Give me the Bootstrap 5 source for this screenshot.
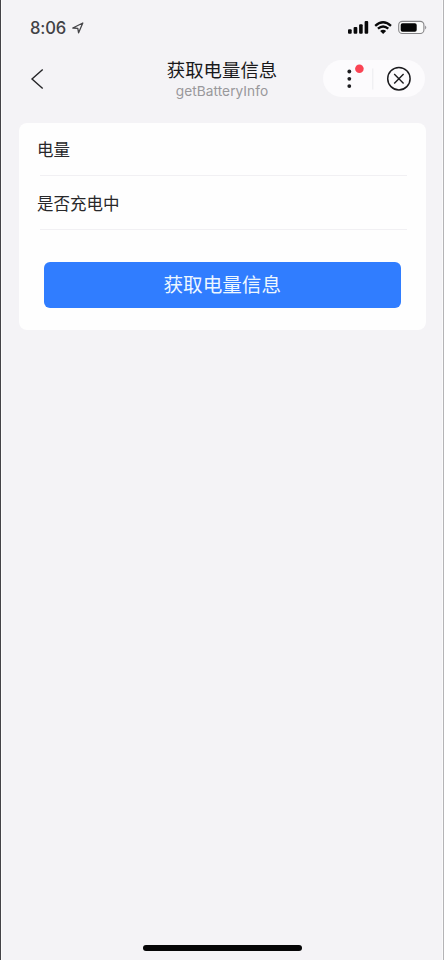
<!DOCTYPE html>
<html lang="zh-CN">
<head>
<meta charset="utf-8">
<meta name="viewport" content="width=device-width, initial-scale=1">
<title>获取电量信息</title>
<link href="https://cdn.jsdelivr.net/npm/bootstrap@5.3.0/dist/css/bootstrap.min.css" rel="stylesheet">
<style>
body{background:#f4f3f6;font-family:"Inter","Noto Sans CJK SC",sans-serif;color:#1d1d20}
.screen{height:960px;border-left:1px solid #444347;border-right:1px solid #b4b3b6;box-shadow:inset 1px 0 #fbfbfb,inset -1px 0 #fafafa}
.status{height:54px;padding-left:29px;padding-right:15px;padding-top:1px}
.clock{font:500 16.6px/20px "Inter",sans-serif;color:#414145;letter-spacing:-.15px}
.locate{margin-left:6px}
.topbar{height:50px;display:grid;grid-template-columns:1fr 112px 1fr}
.back{padding-left:29px}
.heading{font-size:18.4px;line-height:24px;font-weight:400;white-space:nowrap;color:#19191b}
.title-block{padding-top:4px}
.sub{font:400 13.7px/18px "Inter",sans-serif;color:#99989b;letter-spacing:.05px}
.capsule{width:102px;height:37px;background:#fcfbfd;margin-right:18px;margin-bottom:2px}
.panel{margin:18.5px 17px 0 18px;height:207px;border-radius:8px;background:#fefefe}
.item{height:54px;margin:0 19px 0 18px;font-size:16.5px;line-height:55px;color:#28282a}
.item::after{content:"";display:block;height:1px;margin-left:3px;margin-top:-3px;background:#f1f0f3}
.fetch{margin:31px 25px 0 24.5px;height:46px;border-radius:6px;background:#307dff;border:0;color:#edf7ff;font-size:19.6px;line-height:46px;padding:0}
.home{width:159px;height:6px;background:#050506;margin-bottom:9px}
</style>
</head>
<body>
<div class="screen d-flex flex-column">
  <div class="status d-flex align-items-center justify-content-between">
    <div class="d-flex align-items-center">
      <span class="clock">8:06</span>
      <svg class="locate" width="12" height="12" viewBox="0 0 12 12"><path d="M.8 6 10.8 1 6.6 10.8 5.8 6.3Z" fill="none" stroke="#454548" stroke-width="1.3" stroke-linejoin="round"/></svg>
    </div>
    <svg width="80" height="16" viewBox="348 20 80 16">
      <g fill="#09090a"><rect x="348" y="29.3" width="3.7" height="4.5" rx="1"/><rect x="353.6" y="27" width="3.7" height="6.8" rx="1"/><rect x="359.1" y="24.2" width="3.6" height="9.6" rx="1"/><rect x="364.6" y="21.1" width="3.6" height="12.7" rx="1"/>
      <path d="M380.1 30.9Q383.1 28.6 386.1 30.9L383.1 34Z"/></g>
      <g fill="none" stroke="#09090a" stroke-width="2.3"><path d="M375.2 25.8Q383.1 18.8 391 25.8"/><path d="M377.9 28.7Q383.1 24.3 388.3 28.7"/></g>
      <rect x="398.7" y="21.4" width="25.2" height="12.1" rx="3.6" fill="#fafafa" stroke="#858487" stroke-width="1.1"/>
      <rect x="400.7" y="23.2" width="16" height="8.6" rx="1.8" fill="#050505"/><path d="M425.2 25.5Q427.3 27.5 425.2 29.5Z" fill="#858487"/>
    </svg>
  </div>
  <header class="topbar">
    <div class="back d-flex align-items-center"><svg width="15" height="22" viewBox="0 0 15 22"><path d="M12.7 1.4 2 11 12.7 20.6" fill="none" stroke="#242427" stroke-width="1.4"/></svg></div>
    <div class="title-block text-center d-flex flex-column align-items-center"><h1 class="heading m-0">获取电量信息</h1><div class="sub">getBatteryInfo</div></div>
    <div class="d-flex align-items-center justify-content-end">
      <div class="capsule rounded-pill flex-shrink-0">
        <svg class="d-block" width="102" height="37" viewBox="323 59.5 102 37"><g fill="#1d1d20"><circle cx="349.3" cy="71" r="1.9"/><circle cx="349.3" cy="78.3" r="1.9"/><circle cx="349.3" cy="85.6" r="1.9"/></g><circle cx="359.4" cy="68.2" r="4.3" fill="#fa4454"/><path d="M372.8 68V89" stroke="#ecebee"/><circle cx="398.9" cy="78.2" r="11.2" fill="none" stroke="#1b1b1e" stroke-width="1.5"/><path d="m394.2 73.5 9.4 9.4m0-9.4-9.4 9.4" stroke="#1b1b1e" stroke-width="1.4"/></svg>
      </div>
    </div>
  </header>
  <main class="panel d-flex flex-column">
    <div class="item">电量</div>
    <div class="item">是否充电中</div>
    <button type="button" class="btn fetch">获取电量信息</button>
  </main>
  <div class="home rounded-pill mx-auto mt-auto"></div>
</div>
<script src="https://cdn.jsdelivr.net/npm/bootstrap@5.3.0/dist/js/bootstrap.bundle.min.js"></script>
</body>
</html>
